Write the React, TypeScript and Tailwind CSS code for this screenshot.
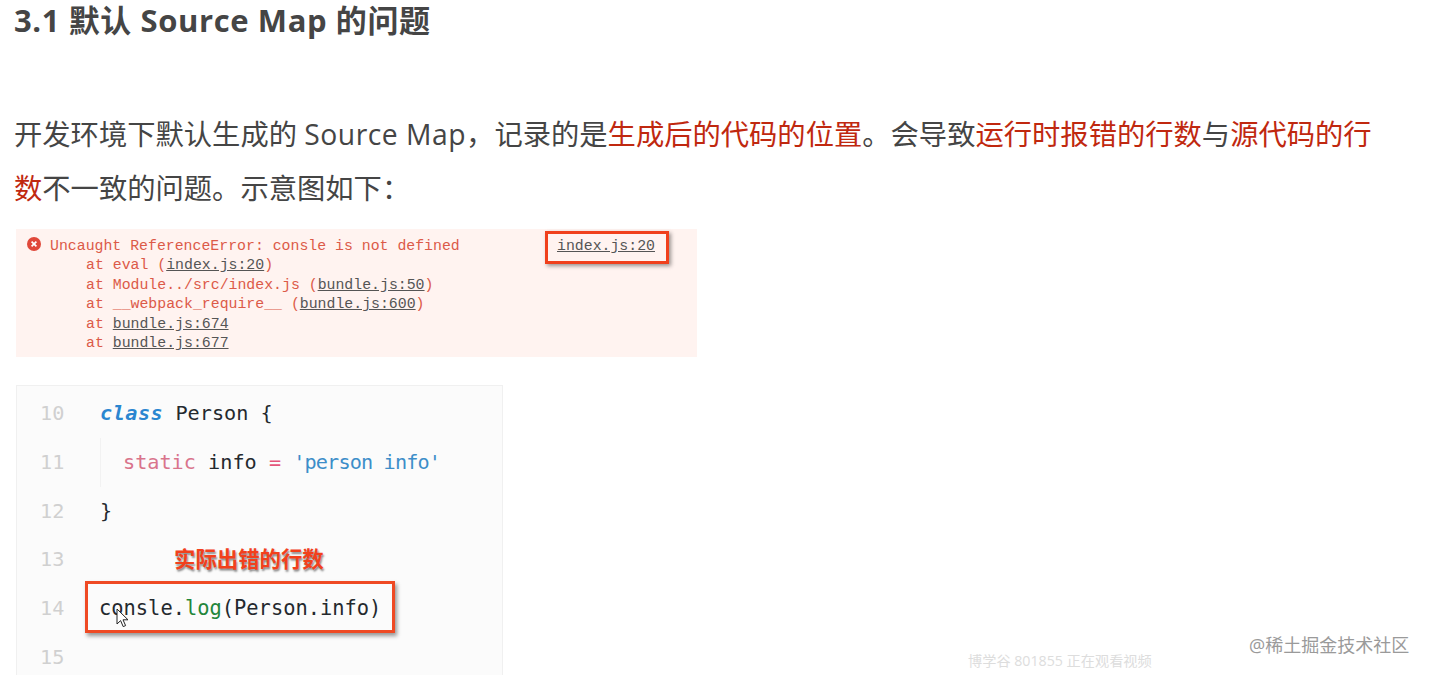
const sans = "font-['Open_Sans','Noto_Sans_CJK_SC',sans-serif]";
const mono = "font-['Liberation_Mono','Noto_Sans_CJK_SC',monospace]";
const codeFont = "font-['DejaVu_Sans_Mono','Noto_Sans_CJK_SC',monospace]";

const Red = ({ children }: { children: React.ReactNode }) => <span className="text-[#c0280f]">{children}</span>;

const Link = ({ children }: { children: React.ReactNode }) => <span className="text-[#555] underline">{children}</span>;

const traces: React.ReactNode[] = [
  <>eval (<Link>index.js:20</Link>)</>,
  <>Module../src/index.js (<Link>bundle.js:50</Link>)</>,
  <>__webpack_require__ (<Link>bundle.js:600</Link>)</>,
  <Link>bundle.js:674</Link>,
  <Link>bundle.js:677</Link>,
];

const ErrorPanel = () => (
  <div className={`ml-[16px] mt-[13px] h-[128px] w-[681px] bg-[#fff3f0] pl-[10px] pt-[8px] text-[14.85px] leading-[19.5px] text-[#dc5a48] ${mono}`}>
    <div className="flex">
      <svg width="14" height="14" viewBox="0 0 14 14" className="ml-[1px] shrink-0">
        <circle cx="7" cy="7" r="7" fill="#e0483a" />
        <path d="M4.6 4.6l4.8 4.8M9.4 4.6l-4.8 4.8" stroke="#fff" strokeWidth="1.7" />
      </svg>
      <span className="ml-[9px] w-[507px] shrink-0">Uncaught ReferenceError: consle is not defined</span>
      <div className="relative">
        <Link>index.js:20</Link>
        <div className="absolute left-[-12px] top-[-6px] h-[33px] w-[124px] border-[3px] border-[#f0401c] shadow-[2px_2px_4px_rgba(0,0,0,0.4)]" />
      </div>
    </div>
    {traces.map((t, i) => (
      <div key={i} className="pl-[60px]">at {t}</div>
    ))}
  </div>
);

const Gutter = ({ n }: { n: number }) => <span className="w-[83px] shrink-0 pl-[23px] text-[#d0d0d0]">{n}</span>;

const CodePanel = () => (
  <div className={`ml-[16px] mt-[28px] h-[300px] w-[487px] border border-[#f0f0f0] bg-[#fbfbfb] pt-[3.5px] text-[20.2px] leading-[48.7px] text-[#24292e] ${codeFont}`}>
    <div className="flex">
      <Gutter n={10} />
      <span><em className="font-bold tracking-[0.5px] text-[#2a86d0]">class</em> Person {"{"}</span>
    </div>
    <div className="flex">
      <Gutter n={11} />
      <span className="border-l border-[#f2f2f2] pl-[22px]">
        <span className="text-[#d9748c]">static</span> info <span className="text-[#e4557a]">=</span>{" "}
        <span className="tracking-[-0.85px] text-[#3d8ec9]">'person info'</span>
      </span>
    </div>
    <div className="flex">
      <Gutter n={12} />
      <span>{"}"}</span>
    </div>
    <div className="flex">
      <Gutter n={13} />
      <span className={`pl-[74px] text-[21.4px] font-bold text-[#f2401c] [text-shadow:1px_2px_2px_rgba(0,0,0,0.45)] ${sans}`}>实际出错的行数</span>
    </div>
    <div className="flex">
      <Gutter n={14} />
      <div className="relative -ml-[1px] text-[20.4px]">
        <span>consle.<span className="text-[#22863a]">log</span>(Person.info)</span>
        <div className="absolute left-[-14px] top-[-3px] h-[52px] w-[310px] border-[3px] border-[#ef4a24] shadow-[2px_3px_4px_rgba(0,0,0,0.4)]" />
        <svg width="14" height="20" viewBox="0 0 14 20" className="absolute left-[17px] top-[24px]">
          <path d="M1 1v15l3.6-3.4 2.6 6 2.4-1-2.6-5.8h5z" fill="#fff" stroke="#222" strokeWidth="1" />
        </svg>
      </div>
    </div>
    <div className="flex">
      <Gutter n={15} />
    </div>
  </div>
);

export default function App() {
  return (
    <div className={`relative h-[675px] w-[1430px] overflow-hidden bg-white text-[#454545] ${sans}`}>
      <h3 className="pl-[14px] text-[31px] leading-[40px] font-bold tracking-[0.6px]">3.1 默认 Source Map 的问题</h3>
      <p className="mt-[67px] w-[1380px] pl-[14px] text-[28.3px] leading-[54.4px]">
        开发环境下默认生成的 <span className="tracking-[0.5px]">Source Map</span>，记录的是<Red>生成后的代码的位置</Red>。会导致<Red>运行时报错的行数</Red>与<Red>源代码的行数</Red>不一致的问题。示意图如下：
      </p>
      <ErrorPanel />
      <CodePanel />
      <span className="absolute left-[968px] top-[652px] text-[14.2px] leading-[18px] text-[#dddddd]">博学谷 801855 正在观看视频</span>
      <span className="absolute left-[1249px] top-[633px] text-[18px] leading-[24px] text-[#9a9a9a]">@稀土掘金技术社区</span>
    </div>
  );
}
